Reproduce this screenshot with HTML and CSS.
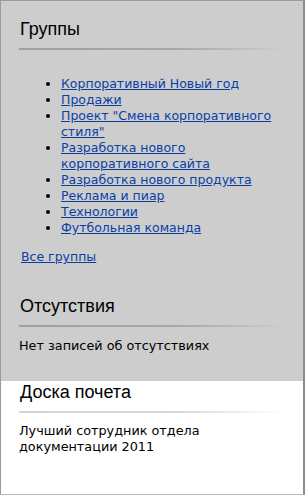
FILE: index.html
```html
<!DOCTYPE html>
<html lang="ru">
<head>
    <meta charset="utf-8">
    <title>Портал</title>
    <link rel="stylesheet" href="styles.css">
</head>
<body>
    <div class="sidebar">
        <div class="block block-gray block-groups">
            <h2 class="block-title">Группы</h2>
            <ul class="group-list">
                <li><a href="#">Корпоративный Новый год</a></li>
                <li><a href="#">Продажи</a></li>
                <li><a href="#">Проект "Смена корпоративного стиля"</a></li>
                <li><a href="#">Разработка нового корпоративного сайта</a></li>
                <li><a href="#">Разработка нового продукта</a></li>
                <li><a href="#">Реклама и пиар</a></li>
                <li><a href="#">Технологии</a></li>
                <li><a href="#">Футбольная команда</a></li>
            </ul>
            <a class="all-link" href="#">Все группы</a>
        </div>
        <div class="block block-gray block-absence">
            <h2 class="block-title">Отсутствия</h2>
            <p class="block-text">Нет записей об отсутствиях</p>
        </div>
        <div class="block block-white">
            <h2 class="block-title">Доска почета</h2>
            <p class="block-text">Лучший сотрудник отдела документации 2011</p>
        </div>
    </div>
</body>
</html>
```

FILE: styles.css
```css
html, body {
    margin: 0;
    padding: 0;
    height: 100%;
}
body {
    font-family: 'DejaVu Sans', Verdana, sans-serif;
    font-size: 12.8px;
    color: #000;
    background-color: #ffffff;
}
.sidebar {
    box-sizing: border-box;
    height: 495px;
    border: 1px solid #9a9a9a;
    border-right: 2px solid #8c8c8c;
    border-bottom-color: #b8b8b8;
    background-color: #ffffff;
    overflow: hidden;
}
.block {
    padding: 0 18px;
}
.block-gray {
    background-color: #cdcdcd;
}
.block-title {
    margin: 0;
    padding-left: 1px;
    font-family: 'Liberation Sans', Arial, sans-serif;
    font-size: 18px;
    font-weight: normal;
    line-height: 20px;
}
/* линия под заголовком */
.block-title::after {
    content: "";
    display: block;
    height: 2px;
    margin: 9px 0 0 -1px;
    background: linear-gradient(to right, #a0a0a0 0%, #a8a8a8 60%, rgba(160, 160, 160, 0) 100%);
}
.block-white .block-title::after {
    background: linear-gradient(to right, #d4d4d4 0%, #d8d8d8 60%, rgba(212, 212, 212, 0) 100%);
}
.block-groups {
    padding-top: 18px;
}
.group-list {
    margin: 26px 0 0 0;
    padding-left: 42px;
    font-size: 12.5px;
    line-height: 16px;
}
.group-list a,
.all-link {
    color: #0b3fa5;
    text-decoration: underline;
}
.all-link {
    display: inline-block;
    margin: 13px 0 0 2px;
    font-size: 12.5px;
    line-height: 16px;
}
.block-absence {
    padding-top: 31px;
    padding-bottom: 27px;
}
.block-text {
    margin: 11px 0 0 0;
    line-height: 16px;
}
.block-white {
    padding-top: 1px;
}
.block-white .block-text {
    margin-top: 10px;
    padding-right: 70px;
}
```
